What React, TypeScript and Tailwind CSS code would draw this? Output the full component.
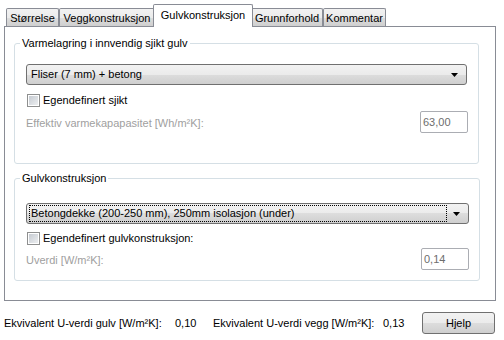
const tabs = [
  { label: "Størrelse", w: "w-[53px]" },
  { label: "Veggkonstruksjon", w: "w-[96px]" },
  { label: "Gulvkonstruksjon", w: "w-[100px]", active: true },
  { label: "Grunnforhold", w: "w-[72px]" },
  { label: "Kommentar", w: "w-[63px]" },
];

function Arrow() {
  return (
    <svg width="7" height="4" viewBox="0 0 7 4" className="block">
      <polygon points="0,0 7,0 3.5,4" fill="#000" />
    </svg>
  );
}

function Dropdown({ text, width, focused }: { text: string; width: string; focused?: boolean }) {
  return (
    <div
      className={`${width} h-[21px] ml-[11px] flex items-center border border-[#707070] rounded-[3px] bg-[linear-gradient(#f2f2f2,#ebebeb_50%,#dddddd_50%,#cfcfcf)]`}
    >
      <div className="flex-1 h-full p-[1px] pl-[2px]">
        <div
          className={`h-full flex items-center pl-[1px] ${
            focused ? "border border-dotted border-black" : "border border-transparent"
          }`}
        >
          {text}
        </div>
      </div>
      <div className="w-[20px] flex justify-center pr-[3px]">
        <Arrow />
      </div>
    </div>
  );
}

function Checkbox({ label }: { label: string }) {
  return (
    <div className="flex items-center ml-[12px] h-[13px]">
      <div className="w-[13px] h-[13px] border border-[#8e8f8f] bg-white p-[1px]">
        <div className="w-full h-full bg-[linear-gradient(135deg,#c6cbd2,#eceef0)]" />
      </div>
      <span className="ml-[3px]">{label}</span>
    </div>
  );
}

function ValueRow({ label, value, inputW }: { label: string; value: string; inputW: string }) {
  return (
    <div className="flex items-center justify-between ml-[11px]">
      <span className="text-[#a0a0a0] pt-[3px]">{label}</span>
      <div
        className={`${inputW} h-[22px] border border-[#abadb3] rounded-[2px] bg-white text-[#6d6d6d] flex items-center pl-[2px]`}
      >
        {value}
      </div>
    </div>
  );
}

export default function App() {
  return (
    <div className="w-[504px] h-[340px] bg-white text-black text-[11px] leading-[13px] font-['Liberation_Sans',Arial,sans-serif] overflow-hidden">
      {/* Tabs */}
      <div className="h-[26px] pl-[6px] flex items-end">
        {tabs.map((t) =>
          t.active ? (
            <div
              key={t.label}
              className={`${t.w} -mx-[2px] h-[23px] -mb-[1px] relative z-10 bg-white border-t border-l border-r border-[#898c95] rounded-t-[2px] flex justify-center pt-[4px]`}
            >
              {t.label}
            </div>
          ) : (
            <div
              key={t.label}
              className={`${t.w} h-[18px] border-t border-l border-r border-[#898c95] rounded-t-[2px] bg-[linear-gradient(#f2f2f2,#ebebeb_50%,#dddddd_50%,#cfcfcf)] flex justify-center pt-[3px]`}
            >
              {t.label}
            </div>
          )
        )}
      </div>

      {/* Panel */}
      <div className="ml-[4px] w-[492px] h-[275px] border border-[#898c95] bg-white pt-[10px] pl-[9px]">
        <fieldset className="w-[465px] border border-[#d5dfe5] rounded-[3px] pt-[14px] pb-[30px] pr-[10px]">
          <legend className="ml-[5px] px-[2px]">Varmelagring i innvendig sjikt gulv</legend>
          <Dropdown text="Fliser (7 mm) + betong" width="w-[441px]" />
          <div className="mt-[9px]">
            <Checkbox label="Egendefinert sjikt" />
          </div>
          <div className="mt-[4px]">
            <ValueRow label="Effektiv varmekapapasitet [Wh/m²K]:" value="63,00" inputW="w-[48px]" />
          </div>
        </fieldset>

        <fieldset className="mt-[8px] w-[466px] border border-[#d5dfe5] rounded-[3px] pt-[18px] pb-[10px] pr-[10px]">
          <legend className="ml-[5px] px-[2px]">Gulvkonstruksjon</legend>
          <Dropdown text="Betongdekke (200-250 mm), 250mm isolasjon (under)" width="w-[443px]" focused />
          <div className="mt-[8px]">
            <Checkbox label="Egendefinert gulvkonstruksjon:" />
          </div>
          <div className="mt-[3px]">
            <ValueRow label="Uverdi [W/m²K]:" value="0,14" inputW="w-[48px]" />
          </div>
        </fieldset>
      </div>

      {/* Bottom row */}
      <div className="mt-[11px] flex items-center pl-[4px]">
        <span className="w-[171px]">Ekvivalent U-verdi gulv [W/m²K]:</span>
        <span className="w-[38px]">0,10</span>
        <span className="w-[170px]">Ekvivalent U-verdi vegg [W/m²K]:</span>
        <span>0,13</span>
        <button className="ml-auto mr-[9px] w-[73px] h-[22px] border border-[#707070] rounded-[3px] bg-[linear-gradient(#f2f2f2,#ebebeb_50%,#dddddd_50%,#cfcfcf)] flex items-center justify-center">
          Hjelp
        </button>
      </div>
    </div>
  );
}
